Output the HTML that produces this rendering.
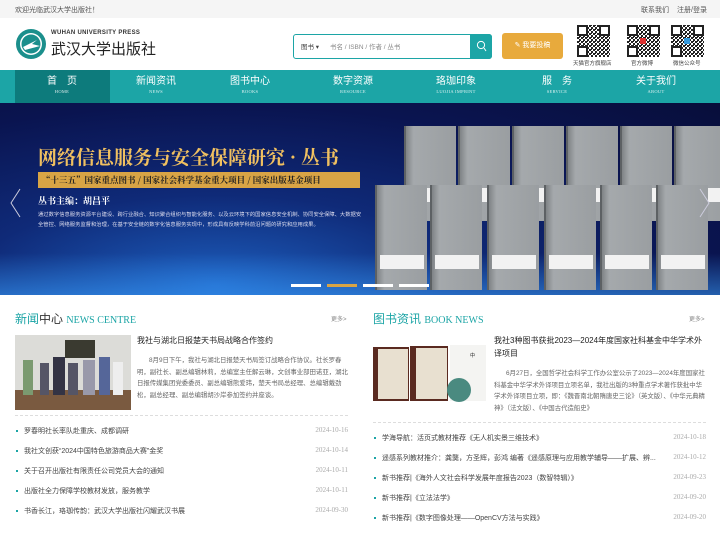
<!DOCTYPE html>
<html><head><meta charset="utf-8"><style>
*{margin:0;padding:0;box-sizing:border-box}
body{width:720px;height:540px;overflow:hidden;font-family:"Liberation Sans","Noto Sans CJK SC",sans-serif;background:#fff;position:relative;color:#333}
.a{position:absolute;white-space:nowrap}
.top{position:absolute;left:0;top:0;width:720px;height:18px;background:#f5f5f5;font-size:7px;color:#555}
.nav{position:absolute;left:0;top:70px;width:720px;height:33px;background:#1ca5a6}
.nav .it{position:absolute;top:0;height:33px;text-align:center;color:#fff;font-size:10px;width:90px;margin-left:-45px;padding-top:6px;line-height:11px}
.nav .it small{display:block;font-size:4.5px;font-family:"Liberation Serif",serif;letter-spacing:.3px;line-height:9px;opacity:.85}
.banner{position:absolute;left:0;top:103px;width:720px;height:192px;background:radial-gradient(ellipse at 30% 95%,#1d5fbf 0%,#0f2a78 35%,#0a1450 70%,#080e3a 100%);overflow:hidden}
.book{position:absolute;width:52px;height:95px;background:linear-gradient(90deg,#7f8386,#a5a9ac 15%,#9a9ea1);border-left:2px solid #5d6164}
.book i{position:absolute;left:3px;right:3px;top:62px;height:14px;background:#f2f2f2}
.list{position:absolute;font-size:7px;color:#444}
.list div{height:20px;position:relative;padding-left:9px}
.list div:before{content:"";position:absolute;left:1px;top:4px;width:2px;height:2px;background:#1ca5a6}
.list span{position:absolute;right:0;top:0;color:#aaa;font-family:"Liberation Serif",serif}
.p{font-size:6.4px;color:#666;line-height:11.5px;white-space:normal}
</style></head><body>
<div class="top"><span class="a" style="left:15px;top:5px">欢迎光临武汉大学出版社！</span><span class="a" style="left:641px;top:5px">联系我们</span><span class="a" style="left:677px;top:5px">注册/登录</span></div>
<svg class="a" style="left:15px;top:28px" width="32" height="32" viewBox="0 0 32 32"><circle cx="16" cy="16" r="15" fill="#1b8f8c"/><circle cx="16" cy="16" r="11" fill="#fff"/><circle cx="16" cy="16" r="9.5" fill="#1b8f8c"/><path d="M8 19 L22 12 L17 16 L25 18 L10 22Z" fill="#fff"/></svg>
<div class="a" style="left:51px;top:30px;font-size:6px;font-weight:bold;color:#333;letter-spacing:.3px">WUHAN UNIVERSITY PRESS</div>
<div class="a" style="left:51px;top:38px;font-size:15px;color:#222">武汉大学出版社</div>
<div class="a" style="left:293px;top:34px;width:199px;height:25px;border:1px solid #1ca5a6;border-radius:3px;background:#fff"></div>
<div class="a" style="left:470px;top:34px;width:22px;height:25px;background:#1ca5a6;border-radius:0 3px 3px 0"></div>
<svg class="a" style="left:476px;top:40px" width="11" height="12"><circle cx="5" cy="5" r="3.6" stroke="#fff" fill="none"/><path d="M8 8 L10 11" stroke="#fff"/></svg>
<div class="a" style="left:301px;top:41px;font-size:6.5px;color:#444">图书 ▾</div>
<div class="a" style="left:330px;top:41px;font-size:6.5px;color:#888">书名 / ISBN / 作者 / 丛书</div>
<div class="a" style="left:502px;top:33px;width:61px;height:26px;background:#e8aa3c;border-radius:3px;color:#fff;font-size:7px;text-align:center;line-height:26px">✎ 我要投稿</div>
<svg width="0" height="0" style="position:absolute"><defs><pattern id="q" width="4" height="4" patternUnits="userSpaceOnUse"><rect width="2" height="2" fill="#222"/><rect x="2" y="2" width="2" height="2" fill="#222"/><rect x="2" y="0" width="1" height="1" fill="#222"/></pattern></defs></svg>
<svg class="a" style="left:577px;top:25px" width="33" height="32"><rect width="33" height="32" fill="url(#q)"/><rect x="1" y="1" width="9" height="9" fill="#fff" stroke="#222" stroke-width="2"/><rect x="23" y="1" width="9" height="9" fill="#fff" stroke="#222" stroke-width="2"/><rect x="1" y="22" width="9" height="9" fill="#fff" stroke="#222" stroke-width="2"/></svg>
<svg class="a" style="left:627px;top:25px" width="33" height="32"><rect width="33" height="32" fill="url(#q)"/><rect x="1" y="1" width="9" height="9" fill="#fff" stroke="#222" stroke-width="2"/><rect x="23" y="1" width="9" height="9" fill="#fff" stroke="#222" stroke-width="2"/><rect x="1" y="22" width="9" height="9" fill="#fff" stroke="#222" stroke-width="2"/><rect x="13" y="13" width="6" height="6" fill="#d33"/></svg>
<svg class="a" style="left:671px;top:25px" width="33" height="32"><rect width="33" height="32" fill="url(#q)"/><rect x="1" y="1" width="9" height="9" fill="#fff" stroke="#222" stroke-width="2"/><rect x="23" y="1" width="9" height="9" fill="#fff" stroke="#222" stroke-width="2"/><rect x="1" y="22" width="9" height="9" fill="#fff" stroke="#222" stroke-width="2"/><rect x="13" y="13" width="6" height="6" fill="#39d"/></svg>
<div class="a" style="left:573px;top:59px;font-size:5.5px;color:#444">天猫官方旗舰店</div>
<div class="a" style="left:631px;top:59px;font-size:5.5px;color:#444">官方微博</div>
<div class="a" style="left:673px;top:59px;font-size:5.5px;color:#444">微信公众号</div>
<div class="nav">
<div class="a" style="left:15px;top:0;width:95px;height:33px;background:#0d7b7c"></div>
<div class="it" style="left:62px">首　页<small>HOME</small></div>
<div class="it" style="left:156px">新闻资讯<small>NEWS</small></div>
<div class="it" style="left:250px">图书中心<small>BOOKS</small></div>
<div class="it" style="left:353px">数字资源<small>RESOURCE</small></div>
<div class="it" style="left:456px">珞珈印象<small>LUOJIA IMPRINT</small></div>
<div class="it" style="left:557px">服　务<small>SERVICE</small></div>
<div class="it" style="left:656px">关于我们<small>ABOUT</small></div>
</div>
<div class="banner">
<div class="a" style="left:0;top:150px;width:720px;height:42px;background:linear-gradient(0deg,#3aa0ff88,transparent)"></div>
<div class="a" style="left:38px;top:40px;font-size:19px;color:#f0c060;font-family:'Noto Serif CJK SC',serif;font-weight:bold">网络信息服务与安全保障研究 · 丛书</div>
<div class="a" style="left:38px;top:69px;width:322px;height:16px;background:#d8a445;color:#222;font-size:8.5px;font-weight:bold;line-height:16px;padding-left:4px;font-family:'Noto Serif CJK SC',serif">“十三五”国家重点图书 / 国家社会科学基金重大项目 / 国家出版基金项目</div>
<div class="a" style="left:38px;top:91px;font-size:9px;color:#fff;font-weight:bold;font-family:'Noto Serif CJK SC',serif">丛书主编：胡昌平</div>
<div class="a p" style="left:38px;top:107px;width:325px;color:#dde;font-size:5.3px;line-height:10px">通过数字信息服务资源平台建设、跨行业融合、知识聚合组织与智能化服务、以及云环境下的国家信息安全机制、协同安全保障、大数据安全管控、网络服务监督和治理，在基于安全链的数字化信息服务实现中，形成具有反映学科前沿问题的研究和应用成果。</div>
<div class="book" style="left:404px;top:23px"><i></i></div><div class="book" style="left:458px;top:23px"><i></i></div><div class="book" style="left:512px;top:23px"><i></i></div><div class="book" style="left:566px;top:23px"><i></i></div><div class="book" style="left:620px;top:23px"><i></i></div><div class="book" style="left:674px;top:23px"><i></i></div>
<div class="book" style="left:375px;top:82px;height:105px"><i style="top:70px"></i></div><div class="book" style="left:430px;top:82px;height:105px"><i style="top:70px"></i></div><div class="book" style="left:487px;top:82px;height:105px"><i style="top:70px"></i></div><div class="book" style="left:544px;top:82px;height:105px"><i style="top:70px"></i></div><div class="book" style="left:600px;top:82px;height:105px"><i style="top:70px"></i></div><div class="book" style="left:656px;top:82px;height:105px"><i style="top:70px"></i></div>
<svg class="a" style="left:9px;top:85px" width="12" height="30"><path d="M11 1 L2 15 L11 29" stroke="#ccd" fill="none"/></svg>
<svg class="a" style="left:699px;top:85px" width="12" height="30"><path d="M1 1 L10 15 L1 29" stroke="#ccd" fill="none"/></svg>
<div class="a" style="left:291px;top:181px;width:30px;height:3px;background:#fff"></div>
<div class="a" style="left:327px;top:181px;width:30px;height:3px;background:#d8a445"></div>
<div class="a" style="left:363px;top:181px;width:30px;height:3px;background:#fff"></div>
<div class="a" style="left:399px;top:181px;width:30px;height:3px;background:#fff"></div>
</div>
<!-- left column -->
<div class="a" style="left:15px;top:310px;font-size:12px;color:#333"><span style="color:#1ca5a6">新闻</span>中心 <span style="font-family:'Liberation Serif',serif;font-size:10px;color:#1ca5a6">NEWS CENTRE</span></div>
<div class="a" style="left:331px;top:314px;font-size:6px;color:#888">更多&gt;</div>
<svg class="a" style="left:15px;top:335px" width="116" height="75"><rect width="116" height="75" fill="#dcdcd8"/><rect x="50" y="5" width="30" height="18" fill="#3a3a30"/><rect x="0" y="55" width="116" height="20" fill="#7a5a40"/><g fill="#556"><rect x="8" y="25" width="10" height="35" fill="#7b9a70"/><rect x="25" y="28" width="9" height="32"/><rect x="38" y="22" width="12" height="38" fill="#334"/><rect x="53" y="28" width="10" height="32"/><rect x="68" y="25" width="12" height="35" fill="#99a"/><rect x="84" y="22" width="11" height="38" fill="#569"/><rect x="98" y="27" width="10" height="33" fill="#eee"/></g></svg>
<div class="a" style="left:137px;top:335px;font-size:8px;color:#222">我社与湖北日报楚天书局战略合作签约</div>
<div class="a p" style="left:137px;top:355px;width:211px;text-indent:12px">8月9日下午，我社与湖北日报楚天书局签订战略合作协议。社长罗春明，副社长、副总编辑林莉，总编室主任解云琳，文创事业部田诺亚，湖北日报传媒集团党委委员、副总编辑熊爱玮，楚天书局总经理、总编辑戴劲松，副总经理、副总编辑胡沙岸参加签约并座谈。</div>
<div class="a" style="left:15px;top:415px;width:333px;border-top:1px dashed #ddd"></div>
<div class="list" style="left:15px;top:426px;width:333px">
<div>罗春明社长率队赴重庆、成都调研<span>2024-10-16</span></div>
<div>我社文创获“2024中国特色旅游商品大赛”金奖<span>2024-10-14</span></div>
<div>关于召开出版社有限责任公司党员大会的通知<span>2024-10-11</span></div>
<div>出版社全力保障学校教材发放，服务教学<span>2024-10-11</span></div>
<div>书香长江，珞珈传韵：武汉大学出版社闪耀武汉书展<span>2024-09-30</span></div>
</div>
<!-- right column -->
<div class="a" style="left:373px;top:310px;font-size:12px;color:#1ca5a6">图书资讯 <span style="font-family:'Liberation Serif',serif;font-size:10px">BOOK NEWS</span></div>
<div class="a" style="left:689px;top:314px;font-size:6px;color:#888">更多&gt;</div>
<svg class="a" style="left:373px;top:345px" width="114" height="57"><rect x="0" y="2" width="36" height="54" fill="#5a2a20"/><rect x="5" y="4" width="30" height="50" fill="#e8e0d0"/><rect x="37" y="1" width="38" height="55" fill="#5a2a20"/><rect x="43" y="3" width="31" height="51" fill="#e8e0d0"/><rect x="77" y="0" width="36" height="56" fill="#f4f4f2"/><circle cx="86" cy="45" r="12" fill="#4a8a80"/><text x="97" y="12" font-size="5" fill="#222" font-family="Noto Sans CJK SC">中</text></svg>
<div class="a p" style="left:494px;top:334px;width:212px;font-size:8px;color:#222;line-height:13px">我社3种图书获批2023—2024年度国家社科基金中华学术外译项目</div>
<div class="a p" style="left:494px;top:368px;width:212px;text-indent:12px">6月27日，全国哲学社会科学工作办公室公示了2023—2024年度国家社科基金中华学术外译项目立项名单，我社出版的3种重点学术著作获批中华学术外译项目立项，即：《魏晋南北朝隋唐史三论》（英文版）、《中华元典精神》（法文版）、《中国古代造船史》</div>
<div class="a" style="left:373px;top:422px;width:333px;border-top:1px dashed #ddd"></div>
<div class="list" style="left:373px;top:433px;width:333px">
<div>学海导航：活页式教材推荐《无人机实景三维技术》<span>2024-10-18</span></div>
<div>遥感系列教材推介：龚龑，方圣辉，彭鸿 编著《遥感原理与应用教学辅导——扩展、辨...<span>2024-10-12</span></div>
<div>新书推荐|《海外人文社会科学发展年度报告2023（数智特辑）》<span>2024-09-23</span></div>
<div>新书推荐|《立法法学》<span>2024-09-20</span></div>
<div>新书推荐|《数字图像处理——OpenCV方法与实践》<span>2024-09-20</span></div>
</div>
</body></html>
